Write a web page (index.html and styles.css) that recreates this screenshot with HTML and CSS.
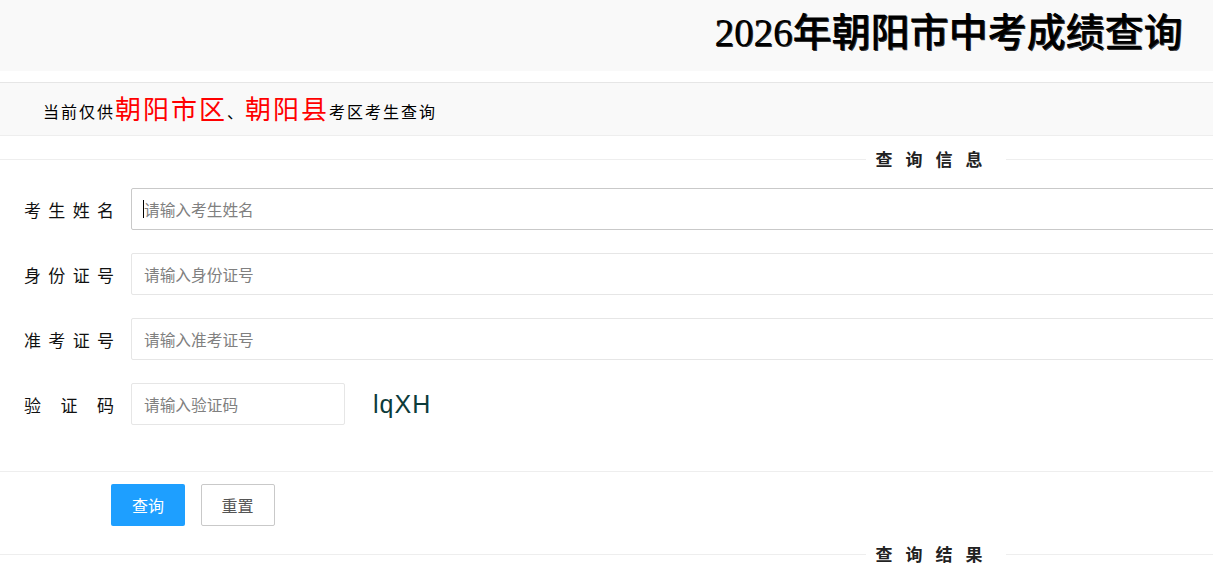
FILE: index.html
```html
<!DOCTYPE html>
<html lang="zh-CN">
<head>
    <meta charset="UTF-8">
    <meta name="viewport" content="width=device-width, initial-scale=1.0">
    <title>2026年朝阳市中考成绩查询</title>
    <link rel="stylesheet" href="styles.css">
</head>
<body>

    <div class="page">
        <div class="top">
            <h1>2026年朝阳市中考成绩查询</h1>
        </div>

        <div class="notice">
            当前仅供<span class="area">朝阳市区</span>、<span class="area">朝阳县</span>考区考生查询
        </div>

        <fieldset class="field-title">
            <legend>查询信息</legend>
        </fieldset>

        <form id="cxform" class="cx-form">
            <div class="form-item">
                <label for="xm">考生姓名</label>
                <div class="input-wrap">
                    <input type="text" id="xm" class="cx-input active" placeholder="请输入考生姓名">
                    <span class="caret"></span>
                </div>
            </div>
            <div class="form-item">
                <label for="sfz">身份证号</label>
                <div class="input-wrap">
                    <input type="text" id="sfz" class="cx-input" placeholder="请输入身份证号">
                </div>
            </div>
            <div class="form-item">
                <label for="zkz">准考证号</label>
                <div class="input-wrap">
                    <input type="text" id="zkz" class="cx-input" placeholder="请输入准考证号">
                </div>
            </div>
            <div class="form-item">
                <label for="yzm">验证码</label>
                <div class="input-wrap short">
                    <input type="text" id="yzm" class="cx-input" placeholder="请输入验证码">
                </div>
                <span class="captcha">lqXH</span>
            </div>

            <div class="btn-row">
                <button type="button" class="btn btn-blue">查询</button>
                <button type="reset" class="btn btn-plain">重置</button>
            </div>
        </form>

        <fieldset class="field-title">
            <legend>查询结果</legend>
        </fieldset>
    </div>

</body>
</html>
```

FILE: styles.css
```css
html, body {
    margin: 0;
    overflow: hidden;
}

body {
    font-family: "Noto Sans CJK SC", sans-serif;
    color: #333;
    background-color: #fff;
}

.page {
    width: 1871px;
}

.top {
    height: 71px;
    background-color: #f9f9f9;
}

.top h1 {
    margin: 0;
    padding: 8px 0 0 26px;
    text-align: center;
    font-family: "Liberation Serif", "Noto Sans CJK SC", serif;
    font-size: 39px;
    font-weight: 500;
    line-height: 50px;
    color: #000;
    text-shadow: 1px 1px 0 #333;
}

.notice {
    margin-top: 11px;
    height: 52px;
    padding-left: 43px;
    background-color: #f9f9f9;
    border-top: 1px solid #e6e6e6;
    border-bottom: 1px solid #eee;
    font-size: 16px;
    letter-spacing: 2px;
    line-height: 50px;
    color: #000;
}

.notice .area {
    font-size: 26px;
    color: #f00;
    vertical-align: -1px;
}

.field-title {
    margin: 0;
    padding: 0;
    border: none;
    border-top: 1px solid #eee;
}

.field-title legend {
    margin: 0 auto;
    padding: 0 10px;
    font-size: 17px;
    font-weight: bold;
    letter-spacing: 13px;
    line-height: 20px;
    color: #222;
}

.notice + .field-title {
    margin-top: 13px;
}

.cx-form {
    padding-top: 19px;
}

.form-item {
    display: flex;
    align-items: center;
    margin-bottom: 23px;
}

.form-item label {
    width: 90px;
    margin-left: 24px;
    margin-right: 17px;
    font-size: 17px;
    text-align: justify;
    text-align-last: justify;
    color: #111;
}

.input-wrap {
    position: relative;
    flex: 1;
    margin-right: 10px;
}

.input-wrap.short {
    flex: none;
    width: 214px;
    margin-right: 0;
}

.cx-input {
    display: block;
    width: 100%;
    height: 42px;
    padding: 0 12px;
    box-sizing: border-box;
    border: 1px solid #e6e6e6;
    border-radius: 2px;
    font-family: "Noto Sans CJK SC", sans-serif;
    font-size: 15.7px;
    color: #333;
    outline: none;
}

.cx-input.active,
.cx-input:focus {
    border-color: #c9c9c9;
}

.cx-input::placeholder {
    color: #808080;
}

/* text cursor of the active field */
.caret {
    position: absolute;
    left: 12px;
    top: 12px;
    width: 1px;
    height: 18px;
    background-color: #000;
}

.captcha {
    margin-left: 28px;
    font-family: "Liberation Sans", sans-serif;
    font-size: 25px;
    letter-spacing: 1px;
    color: #0c3b3a;
}

.btn-row {
    margin-top: 46px;
    padding: 12px 0 18px 111px;
    border-top: 1px solid #eee;
}

.btn {
    height: 42px;
    padding: 0 21px;
    margin-right: 12px;
    border-radius: 2px;
    font-family: "Noto Sans CJK SC", sans-serif;
    font-size: 16px;
    cursor: pointer;
}

.btn-blue {
    background-color: #1e9fff;
    border: none;
    color: #fff;
}

.btn-plain {
    padding: 0 20px;
    background-color: #fff;
    border: 1px solid #c9c9c9;
    color: #555;
}
```
